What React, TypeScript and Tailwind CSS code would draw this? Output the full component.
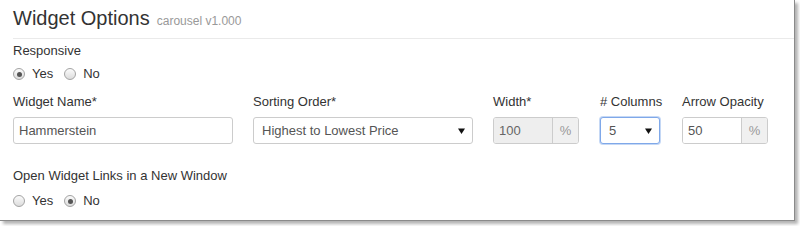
import type { ReactNode } from "react";

const font = "font-['Liberation_Sans',Arial,Helvetica,sans-serif]";

function Radio({ checked, label }: { checked?: boolean; label: string }) {
  return (
    <label className="flex items-center">
      <span className="flex h-[12px] w-[12px] items-center justify-center rounded-full border border-[#a3a3a3] bg-gradient-to-b from-[#fbfbfb] to-[#dcdcdc]">
        {checked && <span className="h-[5px] w-[5px] rounded-full bg-[#555]" />}
      </span>
      <span className="ml-[7px] text-[13px] leading-[18px] text-[#333]">{label}</span>
    </label>
  );
}

function RadioGroup({ value }: { value: "yes" | "no" }) {
  return (
    <div className="flex items-center gap-[11px]">
      <Radio checked={value === "yes"} label="Yes" />
      <Radio checked={value === "no"} label="No" />
    </div>
  );
}

function Field({ label, children, className }: { label: string; children: ReactNode; className?: string }) {
  return (
    <div className={`flex shrink-0 flex-col ${className ?? ""}`}>
      <span className="whitespace-nowrap text-[13px] leading-[18px] text-[#333]">{label}</span>
      <div className="mt-[6px]">{children}</div>
    </div>
  );
}

function Arrow() {
  return (
    <svg width="7" height="6" viewBox="0 0 7 6" className="shrink-0">
      <path d="M0 0.5h7L3.5 6z" fill="#111" />
    </svg>
  );
}

function FakeSelect({ value, focused, className }: { value: string; focused?: boolean; className?: string }) {
  return (
    <div
      className={`flex h-[27px] items-center justify-between rounded-[3px] border bg-white pl-[8px] pr-[7px] text-[13px] text-[#555] ${
        focused
          ? "border-[#7fa8e9] shadow-[0_0_0_1px_rgba(127,168,233,0.45)]"
          : "border-[#ccc]"
      } ${className ?? ""}`}
    >
      <span>{value}</span>
      <Arrow />
    </div>
  );
}

function PercentInput({ value, disabled }: { value: string; disabled?: boolean }) {
  return (
    <div className="flex h-[27px] w-[86px] overflow-hidden rounded-[3px] border border-[#ccc]">
      <input
        defaultValue={value}
        disabled={disabled}
        className={`w-[58px] min-w-0 px-[5px] text-[13px] outline-none ${
          disabled ? "bg-[#eeeeee] text-[#666]" : "bg-white text-[#555]"
        }`}
      />
      <span className="flex flex-1 items-center justify-center border-l border-[#ccc] bg-[#f0f0f0] text-[13px] text-[#999]">
        %
      </span>
    </div>
  );
}

export default function App() {
  return (
    <div className={`h-[226px] w-[800px] bg-white ${font}`}>
      <div className="h-[221px] w-[795px] border-b border-r border-[#8a8a8a] bg-white shadow-[3px_3px_3px_rgba(0,0,0,0.3)]">
        <header className="ml-[13px] flex items-baseline border-b border-[#eaeaea] pb-[8px] pt-[6px]">
          <h1 className="text-[20px] leading-[24px] text-[#333]">Widget Options</h1>
          <span className="ml-[7px] text-[12px] text-[#999]">carousel v1.000</span>
        </header>

        <div className="pl-[13px]">
          <div className="mt-[3px] text-[13px] leading-[18px] text-[#333]">Responsive</div>
          <div className="mt-[5px]">
            <RadioGroup value="yes" />
          </div>

          <div className="mt-[10px] flex items-start">
            <Field label="Widget Name*" className="w-[220px]">
              <input
                defaultValue="Hammerstein"
                className="h-[27px] w-[220px] rounded-[3px] border border-[#ccc] bg-white px-[5px] text-[13px] text-[#555] outline-none"
              />
            </Field>
            <Field label="Sorting Order*" className="ml-[20px] w-[220px]">
              <FakeSelect value="Highest to Lowest Price" className="w-[220px]" />
            </Field>
            <Field label="Width*" className="ml-[20px] w-[86px]">
              <PercentInput value="100" disabled />
            </Field>
            <Field label="# Columns" className="ml-[21px] w-[60px]">
              <FakeSelect value="5" focused className="w-[60px]" />
            </Field>
            <Field label="Arrow Opacity" className="ml-[22px] w-[86px]">
              <PercentInput value="50" />
            </Field>
          </div>

          <div className="mt-[23px] text-[13px] leading-[18px] text-[#333]">
            Open Widget Links in a New Window
          </div>
          <div className="mt-[7px]">
            <RadioGroup value="no" />
          </div>
        </div>
      </div>
    </div>
  );
}
